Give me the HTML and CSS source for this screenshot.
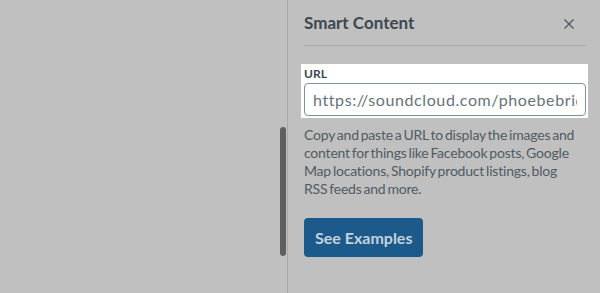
FILE: index.html
```html
<!DOCTYPE html>
<html lang="en">

<head>
    <meta charset="UTF-8">
    <meta name="viewport" content="width=device-width, initial-scale=1.0">
    <title>Smart Content</title>
    <link rel="stylesheet" href="styles.css">
</head>

<body>
    <div class="canvas">
        <div class="scroll-thumb"></div>
    </div>

    <aside class="panel">
        <div class="panel-header">
            <h2>Smart Content</h2>
            <button class="close-btn" aria-label="Close">
                <svg width="10" height="10" viewBox="0 0 10 10">
                    <path d="M0.5 0.5 L9.5 9.5 M9.5 0.5 L0.5 9.5" stroke="#4a5760" stroke-width="1.2" fill="none" />
                </svg>
            </button>
        </div>

        <div class="field">
            <label for="url">URL</label>
            <input id="url" type="text" value="https://soundcloud.com/phoebebridgers">
        </div>

        <p class="help">
            Copy and paste a URL to display the images and content for things like Facebook posts, Google
            Map locations, Shopify product listings, blog RSS feeds and more.
        </p>

        <button class="button">See Examples</button>
    </aside>
</body>

</html>
```

FILE: styles.css
```css
body {
    font-family: 'Lato', sans-serif;
    margin: 0;
    height: 293px;
    display: flex;
    background: #c0c0c0;
    overflow: hidden;
}

.canvas {
    flex: 1;
    position: relative;
    border-right: 1px solid #a9a9a9;
}

.scroll-thumb {
    position: absolute;
    right: 1px;
    top: 127px;
    width: 6px;
    height: 129px;
    border-radius: 3px;
    background: #5f5f5f;
}

.panel {
    width: 282px;
    flex-shrink: 0;
    padding: 0 14px 0 16px;
    color: #505b63;
}

.panel-header {
    display: flex;
    justify-content: space-between;
    align-items: center;
    height: 45px;
    border-bottom: 1px solid #a8a8a8;
}

.panel-header h2 {
    margin: 0;
    font-size: 17px;
    color: #3b4851;
}

.close-btn {
    background: none;
    border: none;
    padding: 0;
    margin: 2px 12px 0 0;
    display: flex;
    cursor: pointer;
}

.field {
    background: #fff;
    margin: 18px -2px 0 -3px;
    padding: 0 2px 2px 3px;
    display: flex;
    flex-direction: column;
}

.field label {
    font-size: 12px;
    font-weight: 700;
    color: #3b4851;
    line-height: 19px;
}

.field input {
    font-family: inherit;
    font-size: 16px;
    letter-spacing: 0.6px;
    color: #66737c;
    height: 33px;
    box-sizing: border-box;
    border: 1px solid #7d919e;
    border-radius: 4px;
    padding: 0 8px;
    outline: none;
}

.help {
    max-width: 273px;
    font-size: 14px;
    letter-spacing: -0.2px;
    word-spacing: -1.5px;
    line-height: 18px;
    margin: 8px 0 0;
}

.button {
    margin-top: 20px;
    background-color: #1c5a8c;
    color: #c5d2dc;
    border: none;
    border-radius: 4px;
    font-family: inherit;
    font-size: 16px;
    font-weight: 700;
    height: 39px;
    padding: 0 11px;
    cursor: pointer;
}
```
